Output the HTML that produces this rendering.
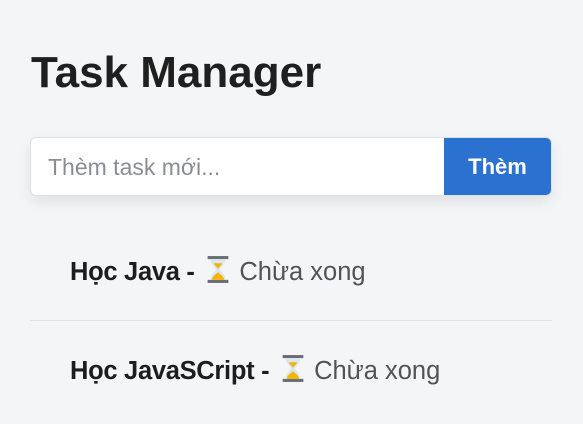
<!DOCTYPE html>
<html><head><meta charset="utf-8"><style>
body{margin:0;width:583px;height:424px;background:#f4f5f6;font-family:"Liberation Sans",sans-serif;overflow:hidden;position:relative}
h1{position:absolute;left:31px;top:47px;margin:0;font-size:44px;font-weight:bold;color:#1f1f1f;line-height:52px}
.box{position:absolute;left:30px;top:137px;width:522px;height:59px;background:#fff;border:1px solid #dde0e4;border-radius:6px;box-shadow:0 6px 14px rgba(0,0,0,.08);overflow:hidden;box-sizing:border-box}
.ph{position:absolute;left:17px;top:16px;font-size:23px;color:#8a8d91}
.btn{position:absolute;right:0;top:0;width:107px;height:100%;background:#2b71cf;color:#fff;font-weight:bold;font-size:22px;text-align:center;line-height:57px}
.item{position:absolute;left:70px;font-size:25.5px;color:#1d1d1d;white-space:nowrap}
.item b{font-weight:bold;letter-spacing:-0.3px}
.item span{color:#505357}
.hr{position:absolute;left:30px;top:320px;width:522px;height:1px;background:#dfe2e5}
svg{vertical-align:-4px;margin:0 8px 0 4px}
</style></head><body>
<h1>Task Manager</h1>
<div class="box"><div class="ph">Thèm task mới...</div><div class="btn">Thèm</div></div>
<div class="item" style="top:255px"><b>Học Java - </b><svg width="26" height="29" viewBox="0 0 24 28"><rect x="2" y="1" width="20" height="3" fill="#6a6f77"/><rect x="2" y="24" width="20" height="3" fill="#6a6f77"/><path d="M5 4h14c0 6-5 8-5 10s5 4 5 10H5c0-6 5-8 5-10S5 10 5 4z" fill="#dbe6ee"/><path d="M8 8h8c-1 3-4 4-4 6-0-2-3-3-4-6zM6 24c1-5 6-6 6-8 0 2 5 3 6 8z" fill="#f4b400"/></svg><span>Chừa xong</span></div>
<div class="hr"></div>
<div class="item" style="top:354px"><b>Học JavaSCript - </b><svg width="26" height="29" viewBox="0 0 24 28"><rect x="2" y="1" width="20" height="3" fill="#6a6f77"/><rect x="2" y="24" width="20" height="3" fill="#6a6f77"/><path d="M5 4h14c0 6-5 8-5 10s5 4 5 10H5c0-6 5-8 5-10S5 10 5 4z" fill="#dbe6ee"/><path d="M8 8h8c-1 3-4 4-4 6-0-2-3-3-4-6zM6 24c1-5 6-6 6-8 0 2 5 3 6 8z" fill="#f4b400"/></svg><span>Chừa xong</span></div>
</body></html>
